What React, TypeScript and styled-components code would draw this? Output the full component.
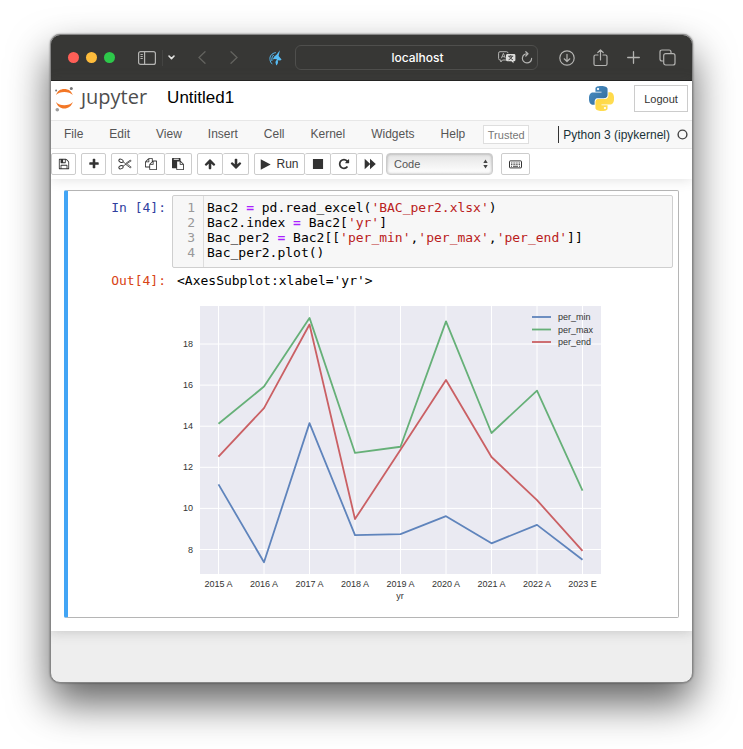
import React from "react";
import styled, { createGlobalStyle } from "styled-components";

const sans = `"Liberation Sans", Arial, Helvetica, sans-serif`;
const mono = `"DejaVu Sans Mono", "Liberation Mono", monospace`;

const GlobalStyle = createGlobalStyle`
  *, *::before, *::after { box-sizing: border-box; }
  body { margin: 0; background: #fff; font-family: ${sans}; color: #000; }
  button, select { font: inherit; color: inherit; margin: 0; }
  svg { display: block; flex: none; }
`;

const Desktop = styled.div`
  min-height: 100vh;
  padding: 34px 50px 66px;
  display: flex;
`;

const Window = styled.div`
  flex: 1;
  min-width: 0;
  display: flex;
  flex-direction: column;
  overflow: hidden;
  border: 1px solid #868686;
  border-radius: 10px;
  background: #eee;
  box-shadow: 0 0 2px rgba(0, 0, 0, 0.5), 0 20px 40px rgba(0, 0, 0, 0.62);
`;

/* Browser chrome */

const TitleBar = styled.header`
  display: flex;
  align-items: center;
  height: 46px;
  padding: 0 16px 0 17px;
  background: #373735;
  border-bottom: 1px solid #1f1f1e;
  color: #b4b4b2;
`;

const Lights = styled.div`
  display: flex;
  gap: 7px;
  margin-right: 23px;
`;

const Light = styled.button<{ $color: string }>`
  width: 11px;
  height: 11px;
  padding: 0;
  border: 0;
  border-radius: 50%;
  background: ${(p) => p.$color};
`;

const ChromeButton = styled.button<{ $gap?: number; $dim?: boolean }>`
  display: block;
  flex: none;
  padding: 0;
  border: 0;
  background: none;
  margin-right: ${(p) => p.$gap ?? 0}px;
  color: ${(p) => (p.$dim ? "#63635f" : "inherit")};
`;

const ChromeDivider = styled.span`
  width: 1px;
  height: 16px;
  margin-right: 5px;
  background: #444442;
`;

const Address = styled.div`
  flex: 1;
  min-width: 0;
  display: flex;
  align-items: center;
  gap: 5px;
  height: 25px;
  padding: 0 4px;
  margin-right: 21px;
  border: 1px solid #4f4f4d;
  border-radius: 6px;
`;

const AddressInput = styled.input`
  flex: 1;
  width: 0;
  min-width: 0;
  padding: 0 0 0 42px;
  border: 0;
  outline: 0;
  background: none;
  color: #fff;
  text-align: center;
  font: 500 12px Inter, ${sans};
`;

/* Notebook header */

const NotebookHeader = styled.div`
  position: relative;
  background: #fff;
  box-shadow: 0 0 12px rgba(87, 87, 87, 0.2);
`;

const Brand = styled.div`
  display: flex;
  align-items: center;
  height: 39px;
  padding: 0 4px 4px 3px;
`;

const JupyterLink = styled.a`
  display: flex;
  align-items: center;
  gap: 7px;
  color: #4e4e4e;
  text-decoration: none;
  font: 20px/24px "Open Sans", sans-serif;
`;

const Wordmark = styled.span`
  padding-bottom: 4px;
`;

const NotebookName = styled.h1`
  flex: 1;
  margin: 0 0 2px 20px;
  font: 17px/20px ${sans};
`;

const LogoutButton = styled.button`
  width: 54px;
  height: 27px;
  margin-left: 20px;
  padding: 0;
  border: 1px solid #ccc;
  background: #fff;
  color: #333;
  font-size: 11px;
`;

const MenuBar = styled.nav`
  display: flex;
  align-items: center;
  height: 29px;
  border: 1px solid #e7e7e7;
  border-width: 1px 0;
  background: #f8f8f8;
  font-size: 12px;
  color: #555;
`;

const MenuItem = styled.button`
  padding: 0 13px 2px;
  border: 0;
  background: none;
`;

const Trusted = styled.button`
  width: 46px;
  height: 19px;
  margin: 0 auto 0 5px;
  padding: 0;
  border: 1px solid #dedede;
  background: #fff;
  color: #777;
  font-size: 11px;
`;

const Kernel = styled.div`
  display: flex;
  align-items: center;
  gap: 7px;
  height: 17px;
  padding: 0 4px;
  border-left: 1px solid #333;
  color: #1a3338;
`;

const Toolbar = styled.div`
  display: flex;
  align-items: center;
  gap: 5px;
  height: 30px;
`;

const ButtonGroup = styled.div`
  display: flex;

  > button + button {
    border-left: 0;
  }
`;

const ToolButton = styled.button<{ $width: number }>`
  display: flex;
  align-items: center;
  justify-content: center;
  gap: 5px;
  width: ${(p) => p.$width}px;
  height: 22px;
  padding: 0;
  border: 1px solid #ccc;
  border-radius: 2px;
  background: #fff;
  color: #333;
  font-size: 12px;
`;

const SelectShell = styled.label`
  position: relative;
  display: block;
  width: 107px;
  height: 22px;
  margin: 0 3px 0 -2px;
  color: #555;
`;

const CellTypeSelect = styled.select`
  appearance: none;
  width: 100%;
  height: 100%;
  padding: 0 7px;
  border: 1px solid #ccc;
  border-radius: 4px;
  background: linear-gradient(#e4e4e4, #fff);
  box-shadow: inset 0 0 3px rgba(0, 0, 0, 0.3);
  font-size: 11px;
`;

const SelectArrows = styled.svg`
  position: absolute;
  right: 5px;
  top: 6px;
  pointer-events: none;
`;

/* Notebook body */

const Notebook = styled.main`
  flex: none;
  padding: 11px 13px 13px;
  background: #fff;
  box-shadow: 0 0 12px rgba(87, 87, 87, 0.3);
`;

const Cell = styled.section`
  padding: 4px 5px 6px 0;
  border: 1px solid #b5b5b5;
  border-left: 4px solid #42a5f5;
  border-radius: 2px;
`;

const CellRow = styled.div`
  display: grid;
  grid-template-columns: 104px minmax(0, 1fr);
  font: 13px/15px ${mono};
`;

const Prompt = styled.div<{ $color: string }>`
  padding: 5px 6px 0 0;
  text-align: right;
  white-space: pre;
  color: ${(p) => p.$color};
`;

const CodeBox = styled.div`
  display: grid;
  grid-template-columns: 31px minmax(0, 1fr);
  border: 1px solid #cfcfcf;
  border-radius: 2px;
  background: #f7f7f7;
`;

const Gutter = styled.div`
  padding: 4px 8px 7px 0;
  border-right: 1px solid #ddd;
  text-align: right;
  color: #999;
`;

const Code = styled.pre`
  margin: 0;
  padding: 4px 3px 7px;
  font: inherit;
`;

const Str = styled.span`
  color: #ba2121;
`;

const Op = styled.span`
  color: #aa22ff;
  font-weight: bold;
`;

const Output = styled.div`
  padding: 5px 0 0 5px;
`;

const ChartSvg = styled.svg`
  display: block;
  width: 100%;
  max-width: 430px;
  margin-top: 2px;
  height: auto;
  font-family: ${sans};
`;

const YTick = styled.text`
  font-size: 9px;
  fill: #333;
  text-anchor: end;
`;

const XTick = styled.text`
  font-size: 9px;
  fill: #333;
  text-anchor: middle;
`;

const LegendText = styled.text`
  font-size: 9px;
  fill: #333;
`;

/* Toolbar glyphs on a 1792-unit grid */

const glyphs = {
  save: "M512 1536h768v-384h-768v384zm896 0h128v-896q0-14-10-38.5t-20-34.5l-281-281q-10-10-34-20t-39-10v416q0 40-28 68t-68 28h-576q-40 0-68-28t-28-68v-416h-128v1280h128v-416q0-40 28-68t68-28h832q40 0 68 28t28 68v416zm-384-928v-320q0-13-9.5-22.5t-22.5-9.5h-192q-13 0-22.5 9.5t-9.5 22.5v320q0 13 9.5 22.5t22.5 9.5h192q13 0 22.5-9.5t9.5-22.5zm640 32v928q0 40-28 68t-68 28h-1344q-40 0-68-28t-28-68v-1344q0-40 28-68t68-28h928q40 0 88 20t76 48l280 280q28 28 48 76t20 88z",
  plus: "M1600 736v192q0 40-28 68t-68 28h-416v416q0 40-28 68t-68 28h-192q-40 0-68-28t-28-68v-416h-416q-40 0-68-28t-28-68v-192q0-40 28-68t68-28h416v-416q0-40 28-68t68-28h192q40 0 68 28t28 68v416h416q40 0 68 28t28 68z",
  copy: "M1696 384q40 0 68 28t28 68v1216q0 40-28 68t-68 28h-960q-40 0-68-28t-28-68v-288h-544q-40 0-68-28t-28-68v-672q0-40 20-88t48-76l408-408q28-28 76-48t88-20h416q40 0 68 28t28 68v328q68-40 128-40h416zm-544 213l-299 299h299v-299zm-640-384l-299 299h299v-299zm196 647l316-316v-416h-384v416q0 40-28 68t-68 28h-416v640h512v-256q0-40 20-88t48-76zm956 804v-1152h-384v416q0 40-28 68t-68 28h-416v640h896z",
  paste: "M768 1664h896v-640h-416q-40 0-68-28t-28-68v-416h-384v1152zm256-1440v-64q0-13-9.5-22.5t-22.5-9.5h-704q-13 0-22.5 9.5t-9.5 22.5v64q0 13 9.5 22.5t22.5 9.5h704q13 0 22.5-9.5t9.5-22.5zm256 672h299l-299-299v299zm512 128v672q0 40-28 68t-68 28h-960q-40 0-68-28t-28-68v-160h-544q-40 0-68-28t-28-68v-1344q0-40 28-68t68-28h1088q40 0 68 28t28 68v328q21 13 36 28l408 408q28 28 48 76t20 88z",
  up: "M1675 971q0 51-37 90l-75 75q-38 38-91 38-54 0-90-38l-294-293v704q0 52-37.5 84.5t-90.5 32.5h-128q-53 0-90.5-32.5t-37.5-84.5v-704l-294 293q-36 38-90 38t-90-38l-75-75q-38-38-38-90 0-53 38-91l651-651q35-37 90-37 54 0 91 37l651 651q37 39 37 91z",
  down: "M1675 821q0-51-37-90l-75-75q-38-38-91-38-54 0-90 38l-294 293v-704q0-52-37.5-84.5t-90.5-32.5h-128q-53 0-90.5 32.5t-37.5 84.5v704l-294-293q-36-38-90-38t-90 38l-75 75q-38 38-38 90 0 53 38 91l651 651q35 37 90 37 54 0 91-37l651-651q37-39 37-91z",
  play: "M120 60L1740 896L120 1732z",
  stop: "M140 140h1512v1512h-1512z",
  restart: "M1664 256v448q0 26-19 45t-45 19h-448q-42 0-59-40-17-39 14-69l138-138q-148-137-349-137-104 0-198.5 40.5t-163.5 109.5-109.5 163.5-40.5 198.5 40.5 198.5 109.5 163.5 163.5 109.5 198.5 40.5q119 0 225-52t179-147q7-10 23-12 15 0 25 9l137 138q9 8 9.5 20.5t-7.5 22.5q-109 132-264 204.5t-327 72.5q-156 0-298-61t-245-164-164-245-61-298 61-298 164-245 245-164 298-61q147 0 284.5 55.5t244.5 156.5l130-129q29-31 70-14 39 17 39 59z",
  forward: "M100 130L900 850V130L1760 896L900 1662V942L100 1662z",
};

const Glyph = ({ name, size = 12 }: { name: keyof typeof glyphs; size?: number }) => (
  <svg width={size} height={size} viewBox="0 0 1792 1792" fill="currentColor" aria-hidden="true">
    <path d={glyphs[name]} />
  </svg>
);

const ScissorsIcon = () => (
  <svg width="14" height="12" viewBox="0 0 14 12" fill="none" stroke="currentColor" aria-hidden="true">
    <ellipse cx="3" cy="2.8" rx="2.2" ry="1.5" transform="rotate(22 3 2.8)" />
    <ellipse cx="3" cy="9.2" rx="2.2" ry="1.5" transform="rotate(-22 3 9.2)" />
    <path d="M5 3.8L7.5 5.6L12.2 2.2L13.2 2.8L7 6.9L5 8.2M7.5 6.2L12.2 9.8L13.2 9.2L9.3 6" strokeWidth="0.8" />
  </svg>
);

const KeyboardIcon = () => (
  <svg width="13" height="9" viewBox="0 0 13 9" fill="none" stroke="currentColor" aria-hidden="true">
    <rect x="0.5" y="0.9" width="12" height="7" rx="0.6" />
    <path d="M2 3h9M2 4.6h9" strokeWidth="0.9" strokeDasharray="1 0.6" />
    <path d="M2 6.3h1M4 6.3h5M10 6.3h1" strokeWidth="0.9" />
  </svg>
);

const PYTHON_HALF =
  "M14.25.18l.9.2.73.26.59.3.45.32.34.34.25.34.16.33.1.3.04.26.02.2-.01.13V8.5l-.05.63-.13.55-.21.46-.26.38-.3.31-.33.25-.35.19-.35.14-.33.1-.3.07-.26.04-.21.02H8.77l-.69.05-.59.14-.5.22-.41.27-.33.32-.27.35-.2.36-.15.37-.1.35-.07.32-.04.27-.02.21v3.06H3.17l-.21-.03-.28-.07-.32-.12-.35-.18-.36-.26-.36-.36-.35-.46-.32-.59-.28-.73-.21-.88-.14-1.05-.05-1.23.06-1.22.16-1.04.24-.87.32-.71.36-.57.4-.44.42-.33.42-.24.4-.16.36-.1.32-.05.24-.01h.16l.06.01h8.16v-.83H6.18l-.01-2.75-.02-.37.05-.34.11-.31.17-.28.25-.26.31-.23.38-.2.44-.18.51-.15.58-.12.64-.1.71-.06.77-.04.84-.02 1.27.05zm-6.3 1.98l-.23.33-.08.41.08.41.23.34.33.22.41.09.41-.09.33-.22.23-.34.08-.41-.08-.41-.23-.33-.33-.22-.41-.09-.41.09z";

const PythonLogo = () => (
  <svg width="25" height="25" viewBox="0 0 24 24" role="img" aria-label="Python">
    <defs>
      <linearGradient id="pyBlue" x1="0" y1="0" x2="1" y2="1">
        <stop offset="0" stopColor="#4b90c6" />
        <stop offset="1" stopColor="#306998" />
      </linearGradient>
      <linearGradient id="pyYellow" x1="1" y1="1" x2="0" y2="0">
        <stop offset="0" stopColor="#ffd43b" />
        <stop offset="1" stopColor="#ffe05a" />
      </linearGradient>
    </defs>
    <path d={PYTHON_HALF} fill="url(#pyBlue)" />
    <path d={PYTHON_HALF} fill="url(#pyYellow)" transform="rotate(180 12 12)" />
  </svg>
);

const JupyterMark = () => (
  <svg width="20" height="26" viewBox="0 0 20 26" aria-hidden="true">
    <path d="M2 9C3.4 4.9 6.3 2.9 10.3 2.9S17.4 4.9 18.8 9C16.8 6.8 13.9 5.9 10.3 5.9S3.9 6.8 2 9z" fill="#f37726" />
    <path d="M2 16C3.9 18.2 6.8 19.2 10.3 19.2S16.8 18.2 18.8 16C17.4 20.2 14.3 22.5 10.3 22.5S3.4 20.2 2 16z" fill="#f37726" />
    <circle cx="2.1" cy="4.5" r="1" fill="#767677" />
    <circle cx="17.3" cy="2.5" r="1.5" fill="#767677" />
    <circle cx="3.3" cy="23.8" r="1.8" fill="#9e9e9e" />
  </svg>
);

/* Chart */

const years = ["2015 A", "2016 A", "2017 A", "2018 A", "2019 A", "2020 A", "2021 A", "2022 A", "2023 E"];
const series = [
  { name: "per_min", color: "#5f84bc", values: [11.17, 7.38, 14.15, 8.7, 8.75, 9.62, 8.3, 9.2, 7.5] },
  { name: "per_max", color: "#66b078", values: [14.12, 15.93, 19.27, 12.7, 13.0, 19.1, 13.67, 15.73, 10.87] },
  { name: "per_end", color: "#ca6064", values: [12.52, 14.88, 18.95, 9.48, 12.85, 16.25, 12.5, 10.4, 7.93] },
];
const plot = { left: 23, top: 16, width: 401, height: 268 };
const xAt = (i: number) => 41.5 + i * 45.5;
const yAt = (v: number) => 54 + (18 - v) * 20.55;

const Chart = () => (
  <ChartSvg viewBox="0 0 430 321" role="img" aria-label="per_min, per_max and per_end by year">
    <rect x={plot.left} y={plot.top} width={plot.width} height={plot.height} fill="#eaeaf2" />
    {years.map((year, i) => (
      <g key={year}>
        <line x1={xAt(i)} x2={xAt(i)} y1={plot.top} y2={plot.top + plot.height} stroke="#fff" />
        <XTick x={xAt(i)} y={297}>{year}</XTick>
      </g>
    ))}
    {[18, 16, 14, 12, 10, 8].map((v) => (
      <g key={v}>
        <line x1={plot.left} x2={plot.left + plot.width} y1={yAt(v)} y2={yAt(v)} stroke="#fff" />
        <YTick x={16} y={yAt(v) + 3}>{v}</YTick>
      </g>
    ))}
    {series.map((s) => (
      <polyline
        key={s.name}
        points={s.values.map((v, i) => `${xAt(i)},${yAt(v)}`).join(" ")}
        fill="none"
        stroke={s.color}
        strokeWidth="1.8"
        strokeLinejoin="round"
      />
    ))}
    {series.map((s, i) => (
      <g key={s.name}>
        <line x1="355" x2="374" y1={27 + i * 12.5} y2={27 + i * 12.5} stroke={s.color} strokeWidth="1.8" />
        <LegendText x="381" y={30 + i * 12.5}>{s.name}</LegendText>
      </g>
    ))}
    <XTick x="223" y="309">yr</XTick>
  </ChartSvg>
);

const menus = ["File", "Edit", "View", "Insert", "Cell", "Kernel", "Widgets", "Help"];

export default function App() {
  return (
    <>
      <GlobalStyle />
      <Desktop>
        <Window>
          <TitleBar>
            <Lights>
              <Light $color="#ff5f57" aria-label="Close" />
              <Light $color="#febc3b" aria-label="Minimize" />
              <Light $color="#2dc84a" aria-label="Zoom" />
            </Lights>
            <ChromeButton $gap={6} aria-label="Sidebar">
              <svg width="18" height="14" viewBox="0 0 18 14" fill="none" stroke="currentColor" strokeWidth="1.2">
                <rect x="0.6" y="0.6" width="16.8" height="12.8" rx="2" />
                <path d="M6.6 0.6v12.8M2.5 3.5h2.3M2.5 5.5h2.3M2.5 7.5h2.3" />
              </svg>
            </ChromeButton>
            <ChromeDivider />
            <ChromeButton $gap={23} aria-label="Tab groups">
              <svg width="7" height="5" viewBox="0 0 7 5" fill="none" stroke="#e4e4e2" strokeWidth="1.6" strokeLinecap="round" strokeLinejoin="round">
                <path d="M1 1l2.5 2.6L6 1" />
              </svg>
            </ChromeButton>
            <ChromeButton $gap={24} $dim aria-label="Back">
              <svg width="8" height="13" viewBox="0 0 8 13" fill="none" stroke="currentColor" strokeWidth="1.3" strokeLinecap="round">
                <path d="M7 0.8L1 6.5L7 12.2" />
              </svg>
            </ChromeButton>
            <ChromeButton $gap={31} $dim aria-label="Forward">
              <svg width="8" height="13" viewBox="0 0 8 13" fill="none" stroke="currentColor" strokeWidth="1.3" strokeLinecap="round">
                <path d="M1 0.8L7 6.5L1 12.2" />
              </svg>
            </ChromeButton>
            <ChromeButton $gap={13} aria-label="Unicorn extension">
              <svg width="13" height="16" viewBox="0 0 13 16" fill="none">
                <path d="M10.9 0.2L7.8 4.6L5.3 6.6L3.6 9.4L5.6 8.9L8 9.3L6.4 12L7.2 15.4C9.2 14 9.3 12 8.7 10.2L11.2 10.6L12.6 9.4L9.6 6z" fill="#57bdf5" />
                <path d="M6.8 2.6C2.8 3.2 0.4 6.2 1 9.6C1.2 11.6 2 13 3.4 14.2M4.6 5C3 6.8 2.6 8.6 2.9 11" stroke="#57bdf5" />
              </svg>
            </ChromeButton>
            <Address>
              <AddressInput aria-label="Address" defaultValue="localhost" />
              <ChromeButton aria-label="Translate">
                <svg width="18" height="13" viewBox="0 0 18 13" fill="none" stroke="currentColor" strokeLinejoin="round">
                  <path d="M8 9H4.5L2.8 11V9H2Q0.6 9 0.6 7.5V2.2Q0.6 0.7 2 0.7H8.5Q10 0.7 10 2.2" />
                  <path d="M3.3 7.3L5.4 2.3L7.4 7.3M4 5.7h2.8" strokeWidth="0.9" />
                  <path d="M9.5 3H16Q17.4 3 17.4 4.4V9Q17.4 10.3 16 10.3H15.5V12.3L13.5 10.3H9.5Q8 10.3 8 9V4.4Q8 3 9.5 3z" fill="#dededc" stroke="none" />
                  <path d="M10.2 5.2h5M12.7 4.2v1M14.3 5.3Q13 8 10.6 8.8M11.2 5.3Q12.5 8 14.9 8.8" stroke="#373735" strokeWidth="0.9" />
                </svg>
              </ChromeButton>
              <ChromeButton aria-label="Reload">
                <svg width="12" height="13" viewBox="0 0 12 13" fill="none" stroke="currentColor" strokeWidth="1.2" strokeLinecap="round" strokeLinejoin="round">
                  <path d="M6.5 2.8A4.6 4.6 0 1 0 10.6 7.4M4.8 0.7L7 2.8L4.8 5" />
                </svg>
              </ChromeButton>
            </Address>
            <ChromeButton $gap={18} aria-label="Downloads">
              <svg width="16" height="16" viewBox="0 0 16 16" fill="none" stroke="currentColor" strokeWidth="1.2" strokeLinecap="round" strokeLinejoin="round">
                <circle cx="8" cy="8" r="7.2" />
                <path d="M8 4.3v7.2M5.2 8.8L8 11.5L10.8 8.8" />
              </svg>
            </ChromeButton>
            <ChromeButton $gap={19} aria-label="Share">
              <svg width="15" height="18" viewBox="0 0 15 18" fill="none" stroke="currentColor" strokeWidth="1.2" strokeLinecap="round" strokeLinejoin="round">
                <path d="M5 6H2.5Q1 6 1 7.5V15Q1 16.5 2.5 16.5H12.5Q14 16.5 14 15V7.5Q14 6 12.5 6H10M7.5 11V1M4.8 3.5L7.5 0.9L10.2 3.5" />
              </svg>
            </ChromeButton>
            <ChromeButton $gap={19} aria-label="New tab">
              <svg width="13" height="13" viewBox="0 0 13 13" fill="none" stroke="currentColor" strokeWidth="1.3" strokeLinecap="round">
                <path d="M6.5 0.7v11.6M0.7 6.5h11.6" />
              </svg>
            </ChromeButton>
            <ChromeButton aria-label="Tab overview">
              <svg width="17" height="17" viewBox="0 0 17 17" fill="none" stroke="currentColor" strokeWidth="1.2">
                <rect x="4.7" y="4.7" width="11.3" height="11.3" rx="2" />
                <path d="M4.7 12H3Q1 12 1 10V3Q1 1 3 1H10Q12 1 12 3V4.7" />
              </svg>
            </ChromeButton>
          </TitleBar>

          <NotebookHeader>
            <Brand>
              <JupyterLink href="#" aria-label="Jupyter">
                <JupyterMark />
                <Wordmark>ȷupyter</Wordmark>
              </JupyterLink>
              <NotebookName>Untitled1</NotebookName>
              <PythonLogo />
              <LogoutButton>Logout</LogoutButton>
            </Brand>
            <MenuBar>
              {menus.map((label) => (
                <MenuItem key={label}>{label}</MenuItem>
              ))}
              <Trusted>Trusted</Trusted>
              <Kernel>
                Python 3 (ipykernel)
                <svg width="11" height="11" viewBox="0 0 11 11" fill="none" stroke="#444" strokeWidth="1.4" aria-hidden="true">
                  <circle cx="5.5" cy="5.5" r="4.4" />
                </svg>
              </Kernel>
            </MenuBar>
            <Toolbar>
              <ToolButton $width={25} aria-label="Save"><Glyph name="save" /></ToolButton>
              <ToolButton $width={25} aria-label="Insert cell below"><Glyph name="plus" /></ToolButton>
              <ButtonGroup>
                <ToolButton $width={27} aria-label="Cut"><ScissorsIcon /></ToolButton>
                <ToolButton $width={27} aria-label="Copy"><Glyph name="copy" /></ToolButton>
                <ToolButton $width={27} aria-label="Paste"><Glyph name="paste" /></ToolButton>
              </ButtonGroup>
              <ButtonGroup>
                <ToolButton $width={26} aria-label="Move up"><Glyph name="up" /></ToolButton>
                <ToolButton $width={26} aria-label="Move down"><Glyph name="down" /></ToolButton>
              </ButtonGroup>
              <ButtonGroup>
                <ToolButton $width={51}><Glyph name="play" size={11} />Run</ToolButton>
                <ToolButton $width={26} aria-label="Stop"><Glyph name="stop" /></ToolButton>
                <ToolButton $width={26} aria-label="Restart"><Glyph name="restart" /></ToolButton>
                <ToolButton $width={26} aria-label="Restart and run all"><Glyph name="forward" /></ToolButton>
              </ButtonGroup>
              <SelectShell>
                <CellTypeSelect aria-label="Cell type" defaultValue="Code">
                  <option>Code</option>
                  <option>Markdown</option>
                </CellTypeSelect>
                <SelectArrows width="5" height="10" viewBox="0 0 5 10" fill="#444" aria-hidden="true">
                  <path d="M2.5 0.5L4.7 4H0.3zM2.5 9.5L4.7 6H0.3z" />
                </SelectArrows>
              </SelectShell>
              <ToolButton $width={29} aria-label="Command palette"><KeyboardIcon /></ToolButton>
            </Toolbar>
          </NotebookHeader>

          <Notebook>
            <Cell>
              <CellRow>
                <Prompt $color="#303f9f">In [4]:</Prompt>
                <CodeBox>
                  <Gutter>
                    {[1, 2, 3, 4].map((n) => (
                      <div key={n}>{n}</div>
                    ))}
                  </Gutter>
                  <Code>
                    Bac2 <Op>=</Op> pd.read_excel(<Str>'BAC_per2.xlsx'</Str>){"\n"}
                    Bac2.index <Op>=</Op> Bac2[<Str>'yr'</Str>]{"\n"}
                    Bac_per2 <Op>=</Op> Bac2[[<Str>'per_min'</Str>,<Str>'per_max'</Str>,<Str>'per_end'</Str>]]{"\n"}
                    Bac_per2.plot()
                  </Code>
                </CodeBox>
              </CellRow>
              <CellRow>
                <Prompt $color="#d84315">Out[4]:</Prompt>
                <Output>
                  {"<AxesSubplot:xlabel='yr'>"}
                  <Chart />
                </Output>
              </CellRow>
            </Cell>
          </Notebook>
        </Window>
      </Desktop>
    </>
  );
}
